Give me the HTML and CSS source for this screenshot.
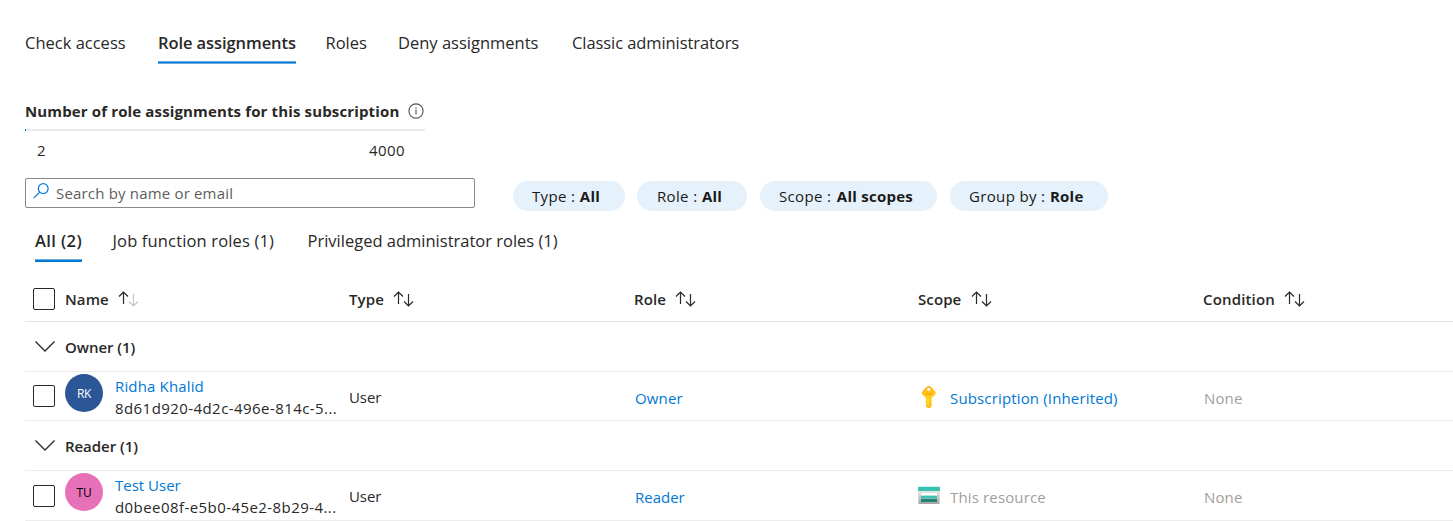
FILE: index.html
```
<!DOCTYPE html>
<html lang="en">
<head>
<meta charset="utf-8">
<title>Role assignments</title>
<link rel="stylesheet" href="styles.css">
</head>
<body>
<svg class="defs" aria-hidden="true">
  <symbol id="arrow-up" viewBox="0 0 11 16"><path d="M5.5 1v12M1 5.5 5.5 1 10 5.5"/></symbol>
  <symbol id="arrow-down" viewBox="0 0 11 16"><path d="M5.5 3v12M1 10.5 5.5 15 10 10.5"/></symbol>
  <symbol id="chevron" viewBox="0 0 20 11"><path d="M.5 .5 10 10 19.5 .5"/></symbol>
</svg>
<nav class="tabs">
  <a class="tab tab-check">Check access</a>
  <a class="tab tab-assign active">Role assignments</a>
  <a class="tab tab-roles">Roles</a>
  <a class="tab tab-deny">Deny assignments</a>
  <a class="tab">Classic administrators</a>
</nav>
<section class="quota">
  <h2 class="quota-title">Number of role assignments for this subscription
    <svg class="info" viewBox="0 0 16 16"><circle cx="8" cy="8" r="7.1"/><path d="M8 6.6v5M8 4.2v1.2"/></svg>
  </h2>
  <div class="bar"><div class="bar-fill"></div></div>
  <div class="quota-values"><span>2</span><span>4000</span></div>
</section>
<section class="filters">
  <div class="search">
    <svg class="search-icon" viewBox="0 0 16 16"><circle cx="10.2" cy="5.6" r="4.9"/><path d="M6.7 9.2 .7 15.2"/></svg>
    <span>Search by name or email</span>
  </div>
  <div class="pill pill-type"><span>Type :</span><b>All</b></div>
  <div class="pill pill-role"><span>Role :</span><b>All</b></div>
  <div class="pill pill-scope"><span>Scope :</span><b>All scopes</b></div>
  <div class="pill pill-group"><span>Group by :</span><b>Role</b></div>
</section>
<nav class="subtabs">
  <a class="subtab subtab-all active">All (2)</a>
  <a class="subtab subtab-job">Job function roles (1)</a>
  <a class="subtab subtab-priv">Privileged administrator roles (1)</a>
</nav>
<main class="table">
  <div class="row head">
    <div class="check"><span class="box"></span></div>
    <div class="cell">Name<span class="sort"><svg><use href="#arrow-up"/></svg><svg class="faded"><use href="#arrow-down"/></svg></span></div>
    <div class="cell">Type<span class="sort"><svg><use href="#arrow-up"/></svg><svg><use href="#arrow-down"/></svg></span></div>
    <div class="cell">Role<span class="sort"><svg><use href="#arrow-up"/></svg><svg><use href="#arrow-down"/></svg></span></div>
    <div class="cell">Scope<span class="sort"><svg><use href="#arrow-up"/></svg><svg><use href="#arrow-down"/></svg></span></div>
    <div class="cell condition">Condition<span class="sort"><svg><use href="#arrow-up"/></svg><svg><use href="#arrow-down"/></svg></span></div>
  </div>
  <div class="row group">
    <div class="check"><svg class="chevron"><use href="#chevron"/></svg></div>
    <div class="cell">Owner (1)</div>
  </div>
  <div class="row user">
    <div class="check"><span class="box"></span></div>
    <div class="cell person">
      <span class="avatar blue">RK</span>
      <div class="who"><a class="link">Ridha Khalid</a><span class="uid">8d61d920-4d2c-496e-814c-5...</span></div>
    </div>
    <div class="cell type">User</div>
    <div class="cell indent"><a class="link">Owner</a></div>
    <div class="cell scope">
      <svg class="scope-icon" viewBox="0 0 22 22">
        <defs><linearGradient id="gold" x1="0" y1="0" x2="0" y2="1"><stop offset="0" stop-color="#feb31a"/><stop offset=".55" stop-color="#ffd01c"/><stop offset="1" stop-color="#fcb91c"/></linearGradient></defs>
        <path fill="url(#gold)" d="M10.800 0c1 0 1.600.4 2.300 1.100l3.800 3.900c1.100 1.100 1.100 2.700 0 3.800l-3.300 3.300v8.400L12 22H9.700l-1.800-1.600v-8.300L4.500 8.800c-1.100-1.100-1.100-2.700 0-3.800l3.900-3.900C9.100.4 9.800 0 10.800 0z"/>
        <circle cx="10.700" cy="3.400" r="1.600" fill="#fff"/><path d="M7.300 7.300h6.800v1.600H7.300z" fill="#f9a80c"/><path d="M10 13v7" stroke="#ffe14d" stroke-width="1"/>
      </svg>
      <a class="link">Subscription (Inherited)</a>
    </div>
    <div class="cell indent muted">None</div>
  </div>
  <div class="row group group-reader">
    <div class="check"><svg class="chevron"><use href="#chevron"/></svg></div>
    <div class="cell">Reader (1)</div>
  </div>
  <div class="row user last">
    <div class="check"><span class="box"></span></div>
    <div class="cell person">
      <span class="avatar pink">TU</span>
      <div class="who"><a class="link tight">Test User</a><span class="uid">d0bee08f-e5b0-45e2-8b29-4...</span></div>
    </div>
    <div class="cell type">User</div>
    <div class="cell indent"><a class="link tight">Reader</a></div>
    <div class="cell scope muted">
      <svg class="scope-icon" viewBox="0 0 22 22">
        <defs><linearGradient id="silver" x1="0" y1="0" x2="0" y2="1"><stop offset="0" stop-color="#e6e6e6"/><stop offset="1" stop-color="#a3a3a3"/></linearGradient></defs>
        <path fill="url(#silver)" d="M.3 6h21.400v12q0 1-1 1H1.300q-1 0-1-1z"/><path fill="#37c2b1" d="M0 2.600q0-.9.900-.9h20.200q.9 0 .9.900V6H0z"/>
        <path fill="#fff" d="M3 8h16v2.700H3z"/><path fill="#37c2b1" d="M3 10.700h16v2.300H3z"/><path fill="#8fb5b0" d="M3 13h16v1H3z"/><path fill="#258277" d="M3 14h16v3H3z"/>
      </svg>
      <span>This resource</span>
    </div>
    <div class="cell indent muted">None</div>
  </div>
</main>
</body>
</html>
```
FILE: styles.css
```
* { box-sizing: border-box; }
body {
  margin: 0;
  padding-left: 25px;
  height: 521px;
  overflow: hidden;
  background: #fff;
  color: #292827;
  font: 15px/22px "Open Sans", "Noto Sans", sans-serif;
  letter-spacing: .15px;
}
svg { fill: none; stroke: #292827; flex: none; }
.defs { display: none; }

.tabs { display: flex; padding-top: 31px; height: 100px; font-size: 16.5px; line-height: 24px; letter-spacing: 0; }
.tab { height: 33px; white-space: nowrap; }
.tab-check { width: 101px; margin-right: 32px; }
.tab-assign { width: 138px; margin-right: 29.5px; letter-spacing: -.08px; }
.tab-roles { width: 41px; margin-right: 31.5px; }
.tab-deny { width: 141px; margin-right: 33px; }
.tab:last-child { letter-spacing: -.08px; }
.active { font-weight: 600; background: linear-gradient(#0078d4, #0078d4) 0 100% / 100% 2px no-repeat; }
.tab.active { background: linear-gradient(#66aee5 1px, #0078d4 1px, #0078d4 2px, #66aee5 2px) 0 100% / 100% 3px no-repeat; }
.subtab.active { background: linear-gradient(#66aee5 1px, #0078d4 1px) 0 100% / 100% 3px no-repeat; }

.quota { width: 400px; height: 78px; }
.quota-title { display: flex; align-items: center; gap: 9px; margin: 0 0 8px; height: 21px; font-size: 15px; font-weight: 700; letter-spacing: .14px; white-space: nowrap; }
.info { width: 16px; height: 16px; stroke: #555; stroke-width: 1.1; }
.bar { height: 2px; background: #eaeaea; }
.bar-fill { width: 1px; height: 2px; background: #0078d4; }
.quota-values { display: flex; justify-content: space-between; padding: 8px 20px 0 12px; letter-spacing: .4px; }

.filters { display: flex; height: 48px; }
.search { display: flex; width: 450px; height: 30px; margin-right: 38px; padding-left: 7px; border: 1px solid #8a8886; border-radius: 2px; color: #605e5c; line-height: 28px; letter-spacing: .18px; }
.search-icon { width: 16px; height: 16px; margin: 4px 7px 0 0; stroke: #0078d4; stroke-width: 1.2; }
.pill { display: flex; gap: 4.5px; height: 30px; margin-top: 3px; border-radius: 15px; background: #e5f1fb; color: #1b1a19; line-height: 30px; letter-spacing: .35px; white-space: nowrap; padding-left: 19px; }
.pill b { letter-spacing: .25px; }
.pill-type { width: 112px; margin-right: 12px; }
.pill-role { width: 110px; margin-right: 13px; padding-left: 20px; }
.pill-scope { width: 177px; margin-right: 13px; gap: 5.5px; }
.pill-group { width: 158px; }

.subtabs { display: flex; height: 51px; padding: 3px 0 0 10px; font-size: 16.5px; line-height: 24px; }
.subtab { height: 33px; white-space: nowrap; }
.subtab-all { width: 47px; margin-right: 30.500px; letter-spacing: .4px; }
.subtab-job { width: 162px; margin-right: 33px; letter-spacing: .15px; }
.subtab-priv { letter-spacing: 0; }

.row { display: grid; grid-template-columns: 40px 284px 285px 284px 285px 1fr; align-items: center; border-bottom: 1px solid #ededed; }
.head, .group { font-weight: 600; }
.head { height: 45px; padding-bottom: 1px; border-color: #e4e4e4; letter-spacing: .1px; }
.group { height: 50px; letter-spacing: -.05px; }
.group-reader .cell { padding-top: 1px; }
.user { height: 49px; }
.last { height: 50px; }
.cell { display: flex; align-items: center; }
.condition { letter-spacing: .15px; }
.check { padding-left: 8px; line-height: 0; }
.box { display: inline-block; width: 22px; height: 22px; border: 1.5px solid #292827; border-radius: 2px; }
.sort { display: flex; margin-left: 9.500px; }
.sort svg { width: 11px; height: 16px; stroke-width: 1.2; }
.sort svg + svg { margin-left: -1px; }
.sort .faded { stroke: #c4c4c4; }
.chevron { width: 20px; height: 11px; margin: -1px 0 0 2px; stroke-width: 1.3; }
.user .cell { height: 48px; }
.user .indent, .user .scope { padding-top: 3px; }
.indent { padding-left: 1px; }
.type { padding-top: 1px; letter-spacing: -.1px; }
.person { gap: 12px; }
.avatar { align-self: flex-start; width: 38px; height: 38px; margin-top: 1.5px; border-radius: 50%; font-size: 12px; line-height: 39px; text-align: center; letter-spacing: -.3px; }
.last .avatar { margin-top: 2px; }
.blue { background: #2b5797; color: #fff; }
.pink { background: #e671b8; color: #000; }
.who { display: flex; flex-direction: column; padding-top: 2px; white-space: nowrap; }
.last .person { height: 49px; padding-bottom: 2px; }
.last .avatar { margin-top: 2px; }
.uid { letter-spacing: .43px; }
.link { color: #0078d4; }
.tight { letter-spacing: 0; }
.muted { color: #a19f9d; }
.scope-icon { width: 22px; height: 22px; margin: -2px 10px 0 0; stroke: none; }
.last .scope-icon { margin-top: -3px; }
```
